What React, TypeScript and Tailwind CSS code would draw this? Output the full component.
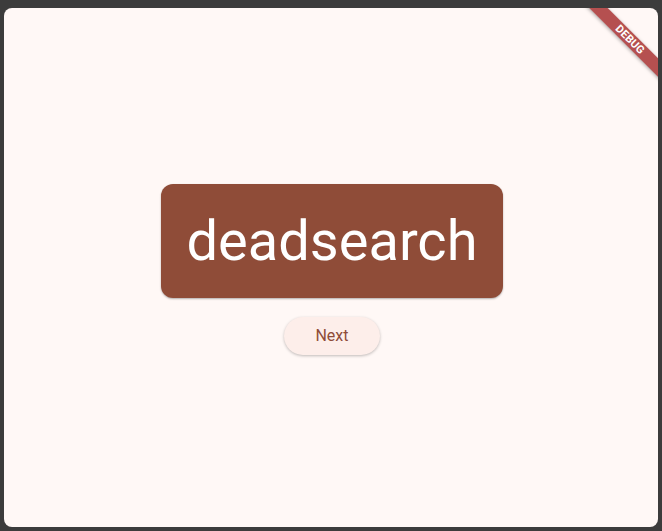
export default function App() {
  return (
    <div className="h-[531px] w-[662px] bg-[#3c3c3c] pt-[8px] pl-[4px] pr-[4px] pb-[4px] font-['Roboto',sans-serif]">
      <div className="relative flex h-full w-full flex-col items-center justify-center gap-[19px] overflow-hidden rounded-[8px] bg-[#fff8f6] pt-[4px] pl-[2px]">
        <div className="flex h-[114px] w-[342px] items-center justify-center rounded-[12px] bg-[#8f4c38] shadow-[0_1px_2px_rgba(0,0,0,0.3)]">
          <span className="text-[56px] leading-none text-white">deadsearch</span>
        </div>
        <button className="flex h-[38px] w-[96px] items-center justify-center rounded-full bg-[#fdeeea] text-[16px] text-[#8f4c38] shadow-[0_1px_3px_rgba(0,0,0,0.25)]">
          Next
        </button>
        <div className="absolute right-[-34px] top-[25px] flex h-[13px] w-[124px] rotate-45 items-center justify-center bg-[#a83232]/[0.85] shadow-[0_1px_4px_rgba(0,0,0,0.35)]">
          <span className="text-[11px] font-bold leading-none tracking-[0.2px] text-white">DEBUG</span>
        </div>
      </div>
    </div>
  );
}
